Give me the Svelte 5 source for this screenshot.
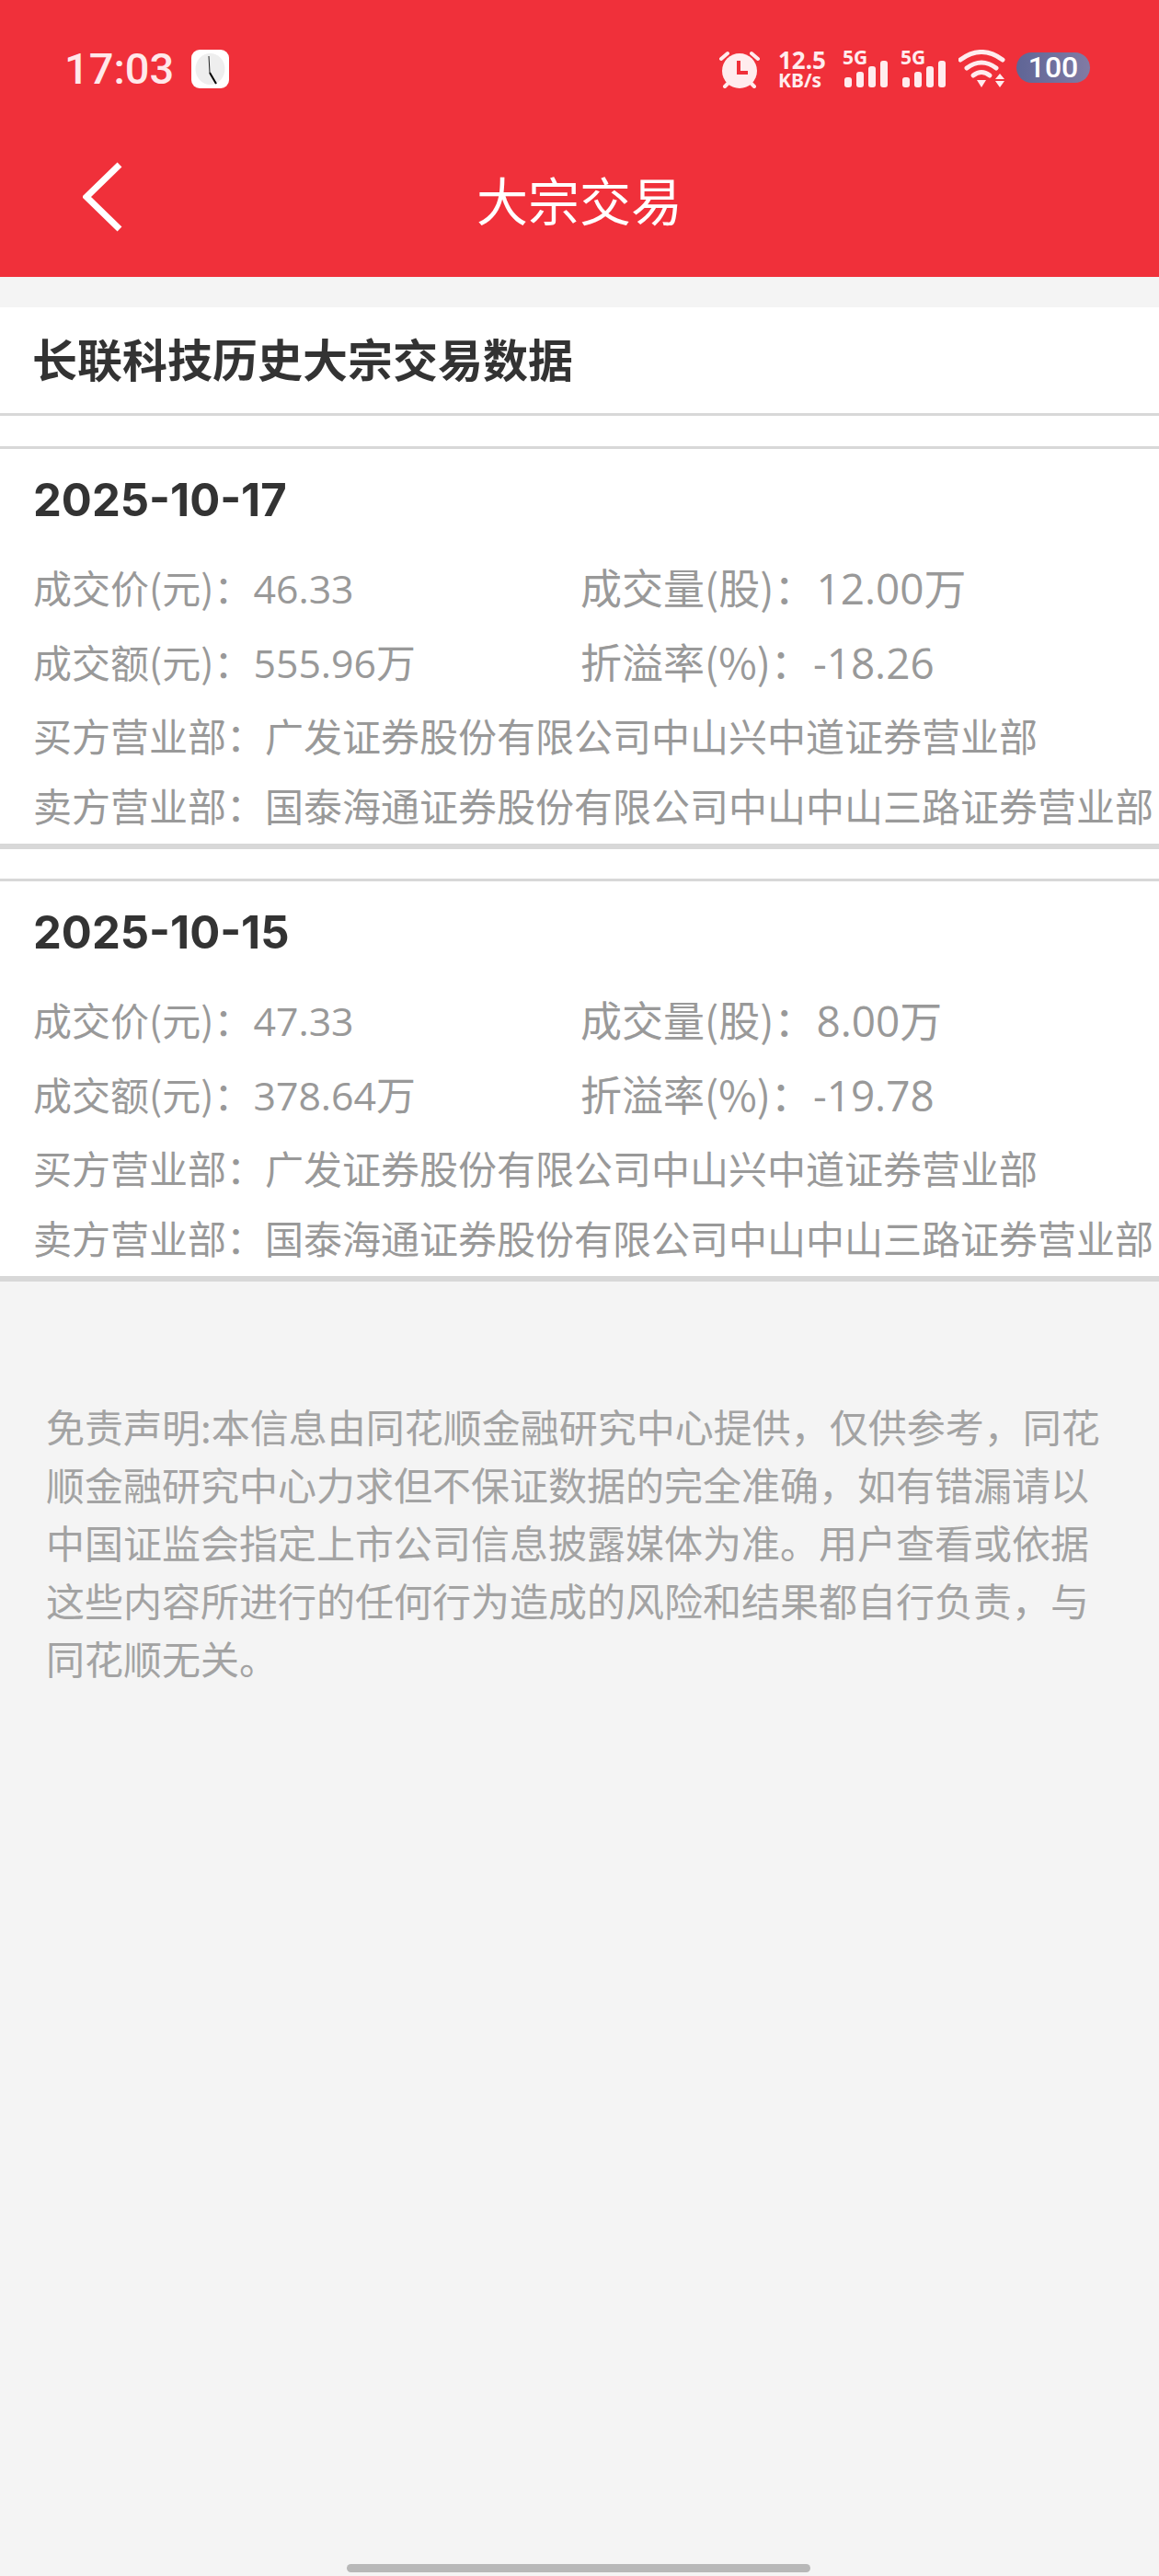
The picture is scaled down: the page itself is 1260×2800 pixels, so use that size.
<script>
  const trades = [
    {
      date: '2025-10-17',
      price: '46.33',
      volume: '12.00万',
      amount: '555.96万',
      rate: '-18.26'
    },
    {
      date: '2025-10-15',
      price: '47.33',
      volume: '8.00万',
      amount: '378.64万',
      rate: '-19.78'
    }
  ];
  const buyer = '广发证券股份有限公司中山兴中道证券营业部';
  const seller = '国泰海通证券股份有限公司中山中山三路证券营业部';
</script>

<main>
  <header>
    <div class="status">
      <span class="time">17:03</span>
      <svg class="clock" width="41" height="42" viewBox="0 0 41 42">
        <rect width="41" height="42" rx="9" fill="#fff" />
        <ellipse cx="20.5" cy="21" rx="16" ry="17" fill="#eeeeee" />
        <path d="M19 7 L20 25" stroke="#222" stroke-width="1" fill="none" />
        <path d="M20 25 L27 37" stroke="#000" stroke-width="2" fill="none" />
      </svg>
      <div class="status-right">
        <svg class="alarm" width="44" height="41" viewBox="0 0 44 41">
          <path d="M2 9 L9 3 M42 9 L35 3" stroke="#ffecee" stroke-width="4" stroke-linecap="round" fill="none" />
          <path d="M6 39 L11 34 M38 39 L33 34" stroke="#ffecee" stroke-width="4" stroke-linecap="round" fill="none" />
          <circle cx="22" cy="22" r="19" fill="#ffecee" />
          <path d="M21 11 V24 H31" stroke="#f0303a" stroke-width="4" fill="none" />
        </svg>
        <div class="speed">
          <span class="speed-num">12.5</span>
          <span class="speed-unit">KB/s</span>
        </div>
        {#each [0, 1] as s}
          <svg class="signal" width="50" height="41" viewBox="0 0 50 41">
            <text x="0" y="16" class="net">5G</text>
            <rect x="2" y="30" width="8" height="11" rx="3" fill="#ffecee" />
            <rect x="15" y="24" width="8" height="17" rx="3" fill="#ffecee" />
            <rect x="28" y="18" width="8" height="23" rx="3" fill="#ffecee" />
            <rect x="41" y="12" width="8" height="29" rx="3" fill="#ffecee" />
          </svg>
        {/each}
        <svg class="wifi" width="51" height="41" viewBox="0 0 51 41">
          <path d="M2 11 Q25 -6 48 11" stroke="#ffecee" stroke-width="5" stroke-linecap="round" fill="none" />
          <path d="M9 20 Q25 8 41 20" stroke="#ffecee" stroke-width="5" stroke-linecap="round" fill="none" />
          <path d="M16 28 Q25 21 34 28" stroke="#ffecee" stroke-width="5" stroke-linecap="round" fill="none" />
          <path d="M20 33 H30 L25 41 Z" fill="#ffecee" />
          <path d="M40 32 H50 L45 26 Z M40 34 H50 L45 41 Z" fill="#ffecee" />
        </svg>
        <div class="battery">100</div>
      </div>
    </div>
    <div class="nav">
      <svg class="back" width="44" height="76" viewBox="0 0 44 76">
        <path d="M40 3 L4 38 L40 73" stroke="#fff" stroke-width="7" fill="none" />
      </svg>
      <h1>大宗交易</h1>
    </div>
  </header>

  <div class="sheet">
    <section class="heading">长联科技历史大宗交易数据</section>

    {#each trades as t}
      <section class="card">
        <div class="date">{t.date}</div>
        <div class="cols">
          <div>成交价(元)：<span class="num">{t.price}</span></div>
          <div class="right">成交量(股)：<span class="num">{t.volume}</span></div>
        </div>
        <div class="cols">
          <div>成交额(元)：<span class="num">{t.amount}</span></div>
          <div class="right">折溢率(%)：<span class="num">{t.rate}</span></div>
        </div>
        <div class="long">买方营业部：{buyer}</div>
        <div class="long">卖方营业部：{seller}</div>
      </section>
    {/each}
  </div>

  <p class="note">免责声明:本信息由同花顺金融研究中心提供，仅供参考，同花顺金融研究中心力求但不保证数据的完全准确，如有错漏请以中国证监会指定上市公司信息披露媒体为准。用户查看或依据这些内容所进行的任何行为造成的风险和结果都自行负责，与同花顺无关。</p>

  <div class="home"></div>
</main>

<style>
  :global(body) { background: #f4f4f4; }
  main {
    position: relative;
    height: 2800px;
    background: #f4f4f4;
    font-family: "Noto Sans CJK SC", "Noto Sans", sans-serif;
    overflow: hidden;
  }
  header { background: #f0303a; height: 301px; color: #fff; }
  .status { display: flex; align-items: flex-start; height: 150px; padding: 54px 75px 0 70px; box-sizing: border-box; }
  .time { width: 118px; font-family: "Roboto", sans-serif; font-size: 47px; font-weight: 500; line-height: 42px; color: #ffe8ea; }
  .clock { margin-left: 20px; }
  .status-right { display: flex; align-items: flex-start; gap: 13px; margin-left: auto; }
  .alarm { margin-top: 1px; margin-right: 7px; }
  .speed { display: flex; flex-direction: column; width: 52px; margin-right: 5px; color: #ffecee; font-family: "Noto Sans", sans-serif; font-weight: 700; }
  .speed-num { font-size: 26px; line-height: 23px; }
  .speed-unit { font-size: 21px; line-height: 20px; white-space: nowrap; }
  .signal { overflow: visible; }
  .net { font-family: "Noto Sans", sans-serif; font-size: 21px; font-weight: 700; fill: #ffecee; }
  .battery {
    width: 80px;
    height: 33px;
    margin-top: 3px;
    margin-left: -1px;
    border-radius: 17px;
    background: linear-gradient(90deg, #5f6596, #817ba4);
    color: #fff;
    font-family: "Roboto", sans-serif;
    font-size: 32px;
    font-weight: 500;
    line-height: 33px;
    text-align: center;
  }
  .nav { display: grid; grid-template-columns: 1fr auto 1fr; align-items: center; height: 151px; padding-bottom: 20px; box-sizing: border-box; }
  .back { margin-left: 90px; margin-bottom: 4px; }
  h1 { margin: 0; font-size: 56px; font-weight: 400; line-height: 70px; }
  .sheet { margin-top: 33px; background: #fff; }
  .heading {
    padding-left: 35px;
    height: 118px;
    box-sizing: border-box;
    line-height: 110px;
    font-size: 49px;
    font-weight: 700;
    color: #333;
    border-bottom: 3px solid #d8d8d8;
  }
  .card {
    margin-top: 33px;
    padding: 21px 0 0 36px;
    height: 438px;
    box-sizing: border-box;
    border-top: 3px solid #d8d8d8;
    border-bottom: 6px solid #d8d8d8;
    color: #999;
    font-size: 42px;
  }
  .card + .card { margin-top: 32px; }
  .date { font-family: "Inter", "Noto Sans CJK SC", sans-serif; font-size: 49px; font-weight: 700; color: #333; line-height: 70px; margin-bottom: 29px; }
  .cols { display: grid; grid-template-columns: 595px 1fr; height: 80.5px; line-height: 60px; }
  .right { font-size: 45px; }
  .num { margin-left: 1px; font-size: 1.02em; font-family: "Open Sans", "Noto Sans CJK SC", sans-serif; }
  .long { height: 76px; line-height: 60px; white-space: nowrap; }
  .note { margin: 0; padding: 125px 60px 0 50px; font-size: 42px; line-height: 63px; color: #a3a3a3; }
  .home { position: absolute; left: 377px; bottom: 4px; width: 504px; height: 9px; border-radius: 5px; background: #b8b8b8; }
</style>
